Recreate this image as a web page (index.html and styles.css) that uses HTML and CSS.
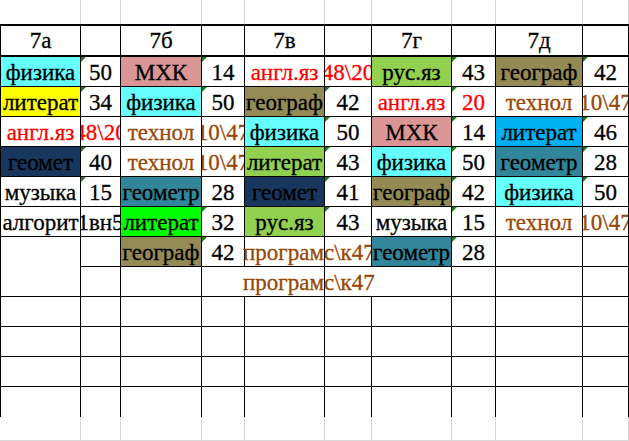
FILE: index.html
```html
<!DOCTYPE html>
<html lang="ru">
<head>
<meta charset="utf-8">
<title>Расписание</title>
<link rel="stylesheet" href="styles.css">
</head>
<body>
<div class="band top">
  <div></div><div></div><div></div><div></div><div></div><div></div><div></div><div></div><div></div><div></div>
</div>
<div class="sheet">
  <div class="c h">7а</div><div class="c h"></div><div class="c h">7б</div><div class="c h"></div><div class="c h">7в</div><div class="c h"></div><div class="c h">7г</div><div class="c h"></div><div class="c h">7д</div><div class="c h"></div>

  <div class="c cy">физика</div><div class="c n">50</div><div class="c pk">МХК</div><div class="c n">14</div><div class="c rd">англ.яз</div><div class="c rd">48\20</div><div class="c gr">рус.яз</div><div class="c n">43</div><div class="c ol">географ</div><div class="c n">42</div>

  <div class="c ye">литерат</div><div class="c n">34</div><div class="c cy">физика</div><div class="c n">50</div><div class="c ol">географ</div><div class="c n">42</div><div class="c rd">англ.яз</div><div class="c n rd">20</div><div class="c br">технол</div><div class="c br">10\47</div>

  <div class="c rd">англ.яз</div><div class="c rd">48\20</div><div class="c br">технол</div><div class="c br">10\47</div><div class="c cy">физика</div><div class="c n">50</div><div class="c pk">МХК</div><div class="c n">14</div><div class="c bl">литерат</div><div class="c n">46</div>

  <div class="c nv">геомет</div><div class="c n">40</div><div class="c br">технол</div><div class="c br">10\47</div><div class="c gr">литерат</div><div class="c n">43</div><div class="c cy">физика</div><div class="c n">50</div><div class="c tl">геометр</div><div class="c n">28</div>

  <div class="c">музыка</div><div class="c n">15</div><div class="c tl">геометр</div><div class="c">28</div><div class="c nv">геомет</div><div class="c n">41</div><div class="c ol">географ</div><div class="c n">42</div><div class="c cy">физика</div><div class="c n">50</div>

  <div class="c">алгорит</div><div class="c">1вн5</div><div class="c lm">литерат</div><div class="c n">32</div><div class="c gr">рус.яз</div><div class="c n">43</div><div class="c">музыка</div><div class="c n">15</div><div class="c br">технол</div><div class="c br">10\47</div>

  <div class="c nb"></div><div class="c"></div><div class="c ol">географ</div><div class="c n">42</div><div class="c br spill">програмс\к47</div><div class="c"></div><div class="c tl">геометр</div><div class="c n">28</div><div class="c"></div><div class="c"></div>

  <div class="c"></div><div class="c"></div><div class="c"></div><div class="c nr"></div><div class="c br spill">програмс\к47</div><div class="c nr"></div><div class="c"></div><div class="c"></div><div class="c"></div><div class="c"></div>

  <div class="c"></div><div class="c"></div><div class="c"></div><div class="c"></div><div class="c"></div><div class="c"></div><div class="c"></div><div class="c"></div><div class="c"></div><div class="c"></div>

  <div class="c"></div><div class="c"></div><div class="c"></div><div class="c"></div><div class="c"></div><div class="c"></div><div class="c"></div><div class="c"></div><div class="c"></div><div class="c"></div>

  <div class="c"></div><div class="c"></div><div class="c"></div><div class="c"></div><div class="c"></div><div class="c"></div><div class="c"></div><div class="c"></div><div class="c"></div><div class="c"></div>

  <div class="c nb"></div><div class="c nb"></div><div class="c nb"></div><div class="c nb"></div><div class="c nb"></div><div class="c nb"></div><div class="c nb"></div><div class="c nb"></div><div class="c nb"></div><div class="c nb"></div>
</div>
<div class="band bottom">
  <div></div><div></div><div></div><div></div><div></div><div></div><div></div><div></div><div></div><div></div>
</div>
</body>
</html>
```

FILE: styles.css
```css
html, body {
  margin: 0;
  padding: 0;
  background: #ffffff;
}

body {
  width: 629px;
  height: 441px;
  overflow: hidden;
  font-family: "Liberation Serif", "Times New Roman", serif;
  font-size: 23px;
  color: #000000;
  -webkit-text-stroke: 0.3px currentColor;
}

.band {
  display: grid;
  grid-template-columns: 80px 40px 81px 43px 80px 47px 80px 44px 87px 46px;
  padding-left: 1px;
  height: 24px;
  box-sizing: border-box;
}

.band > div {
  border-right: 1px solid #d9d9d9;
}

.band.bottom {
  border-bottom: 1px solid #d9d9d9;
}

.sheet {
  display: grid;
  grid-template-columns: 80px 40px 81px 43px 80px 47px 80px 44px 87px 46px;
  grid-template-rows: 31px repeat(12, 30px);
  border-left: 1px solid #000000;
  border-top: 2px solid #000000;
}

.c {
  box-sizing: border-box;
  border-right: 1px solid #000000;
  border-bottom: 1px solid #000000;
  display: flex;
  align-items: flex-end;
  justify-content: center;
  overflow: hidden;
  white-space: nowrap;
  line-height: 24px;
  padding-bottom: 1px;
  position: relative;
}

.h {
  border-bottom-width: 2px;
  padding-bottom: 2px;
}

.nb {
  border-bottom: none;
}

.nr {
  border-right: none;
}

.spill {
  justify-content: flex-start;
  overflow: visible;
  margin-left: -2px;
}

.n::before {
  content: "";
  position: absolute;
  left: 0;
  top: 0;
  width: 0;
  height: 0;
  border-top: 5px solid #1b7d1b;
  border-right: 5px solid transparent;
}

.cy { background: #66ffff; }
.pk { background: #da9694; }
.gr { background: #92d050; }
.ol { background: #948a54; }
.ye { background: #ffff00; }
.bl { background: #00b0f0; }
.nv { background: #17375e; }
.tl { background: #31869b; }
.lm { background: #00ff00; }

.rd { color: #ff0000; }
.br { color: #974706; }
```
